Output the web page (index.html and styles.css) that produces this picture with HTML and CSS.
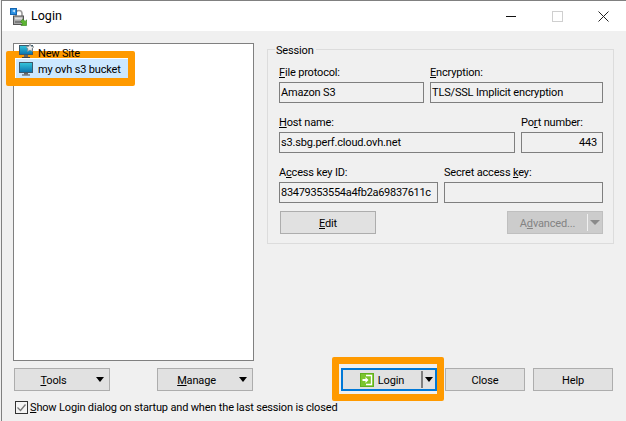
FILE: index.html
```html
<!DOCTYPE html>
<html lang="en">
<head>
<meta charset="utf-8">
<title>Login</title>
<link rel="stylesheet" href="styles.css">
</head>
<body>
<div class="window">
  <header class="titlebar">
    <svg class="app-icon" width="17" height="18" viewBox="0 0 17 18">
      <path d="M6 8V5.5a3 3 0 0 1 6 0V8" fill="none" stroke="#9a9a9a" stroke-width="1.6"/>
      <rect x="3.5" y="8" width="10" height="8.5" fill="#a8a8a8" stroke="#555"/>
      <rect x="5" y="9.5" width="7" height="2" fill="#dcdcdc"/>
      <rect x="5" y="13" width="7" height="2" fill="#7c7c7c"/>
      <rect x="0.5" y="0.5" width="6" height="6" fill="#2a8fe0" stroke="#1565b0"/>
      <path d="M2 3l3-1.5v3z" fill="#bfe3ff"/>
      <path d="M16.5 17.5h-5.5l1.7-1.7-2.2-2.2 2.4-2.4 2.2 2.2 1.7-1.7z" fill="#5cb531" stroke="#2f7d14" stroke-width=".6"/>
    </svg>
    <span class="title">Login</span>
    <div class="controls">
      <span class="control"><svg width="10" height="10" viewBox="0 0 10 10"><path d="M0 5.5h10" stroke="#111"/></svg></span>
      <span class="control"><svg width="11" height="11" viewBox="0 0 11 11"><rect x=".5" y=".5" width="10" height="10" fill="none" stroke="#cfcfcf"/></svg></span>
      <span class="control"><svg width="11" height="11" viewBox="0 0 11 11"><path d="M.5.5l10 10M10.5.5l-10 10" stroke="#222"/></svg></span>
    </div>
  </header>

  <div class="content">
    <div class="main">
      <div class="tree">
        <div class="tree-row new-site">
          <svg class="monitor" width="16" height="15" viewBox="0 0 16 15">
            <defs><linearGradient id="scr" x1="0" y1="0" x2="0" y2="1"><stop offset="0" stop-color="#35c6dc"/><stop offset="1" stop-color="#0a72ae"/></linearGradient></defs>
            <rect x=".5" y="1.5" width="13" height="9" fill="url(#scr)" stroke="#3c5a6c"/>
            <path d="M5 11h4v2H5z" fill="#666"/><path d="M3 13.5h8" stroke="#444"/>
            <path d="M11 0l1.3 2.4 2.7.4-2 1.9.5 2.7-2.5-1.3-2.5 1.3.5-2.7-2-1.9 2.7-.4z" fill="#eee" stroke="#888" stroke-width=".7"/>
          </svg>
          <span>New Site</span>
        </div>
        <div class="tree-row selected">
          <svg class="monitor" width="15" height="14" viewBox="0 0 15 14">
            <rect x=".5" y=".5" width="13" height="10" fill="url(#scr)" stroke="#3c5a6c"/>
            <path d="M5 11h4v1.5H5z" fill="#666"/><path d="M3 13h8" stroke="#444"/>
          </svg>
          <span>my ovh s3 bucket</span>
        </div>
      </div>

      <section class="session">
        <div class="legend">Session</div>
        <div class="field-row">
          <div class="col w145"><label class="lbl"><u>F</u>ile protocol:</label><div class="field">Amazon S3</div></div>
          <div class="col w173"><label class="lbl"><u>E</u>ncryption:</label><div class="field">TLS/SSL Implicit encryption</div></div>
        </div>
        <div class="field-row">
          <div class="col w236"><label class="lbl"><u>H</u>ost name:</label><div class="field">s3.sbg.perf.cloud.ovh.net</div></div>
          <div class="col w82"><label class="lbl">Po<u>r</u>t number:</label><div class="field right">443</div></div>
        </div>
        <div class="field-row">
          <div class="col w159"><label class="lbl">A<u>c</u>cess key ID:</label><div class="field key">83479353554a4fb2a69837611c</div></div>
          <div class="col w159"><label class="lbl">Secret access <u>k</u>ey:</label><div class="field"></div></div>
        </div>
        <div class="session-buttons">
          <div class="btn w96"><span class="btn-label"><u>E</u>dit</span></div>
          <div class="btn w96 disabled">
            <span class="btn-label">A<u>d</u>vanced...</span>
            <span class="sep"></span>
            <span class="arrow"></span>
          </div>
        </div>
      </section>
    </div>

    <div class="bottom">
      <div class="btn w96 menu"><span class="btn-label"><u>T</u>ools</span><span class="arrow"></span></div>
      <div class="btn w96 menu manage"><span class="btn-label"><u>M</u>anage</span><span class="arrow"></span></div>
      <div class="btn w96 login">
        <span class="btn-label with-icon">
          <svg width="14" height="14" viewBox="0 0 14 14">
            <rect width="14" height="14" fill="#62b01e"/>
            <rect x="1" y="1" width="12" height="12" fill="#7cc52e"/>
            <path d="M6 2.5h5.5v9H6" fill="none" stroke="#fff" stroke-width="1.3"/>
            <path d="M2.5 6h3V4l3 3-3 3V8h-3z" fill="#fff"/>
          </svg>
          <span>Login</span>
        </span>
        <span class="sep"></span>
        <span class="arrow"></span>
      </div>
      <div class="btn w80 close"><span class="btn-label">Close</span></div>
      <div class="btn w80 help"><span class="btn-label">Help</span></div>
    </div>

    <div class="check-row">
      <svg class="checkbox" width="13" height="13" viewBox="0 0 13 13">
        <rect x=".5" y=".5" width="12" height="12" fill="#f4f4f4" stroke="#333"/>
        <path d="M2.5 6.5l3 3 5-6" fill="none" stroke="#777" stroke-width="1.3"/>
      </svg>
      <span><u>S</u>how Login dialog on startup and when the last session is closed</span>
    </div>
  </div>

  <div class="mark mark-site"></div>
  <div class="mark mark-login"></div>
</div>
</body>
</html>
```

FILE: styles.css
```css
* { box-sizing: border-box; }
html, body { margin: 0; padding: 0; }
body {
  width: 626px;
  height: 421px;
  overflow: hidden;
  background: #f0f0f0;
  font-family: Roboto, "Noto Sans", sans-serif;
  font-size: 11px;
  letter-spacing: -0.17px;
  color: #000;
}
u { text-underline-offset: 1px; }

.window {
  position: relative;
  width: 625px;
  height: 421px;
  margin-left: 1px;
  border-left: 1px solid #808080;
  border-top: 1px solid #808080;
  background: #f0f0f0;
}

.titlebar {
  display: flex;
  align-items: center;
  height: 30px;
  background: #fff;
  padding-left: 8px;
}
.app-icon { margin-top: 1px; }
.title { margin: -1px 0 0 4px; font-size: 12.5px; letter-spacing: 0; }
.controls { display: flex; margin-left: auto; }
.control {
  display: flex;
  width: 46px;
  height: 30px;
  align-items: center;
  justify-content: center;
}

.content { padding: 12px 0 0 11px; }
.main { display: flex; align-items: flex-start; }

.tree {
  width: 241px;
  height: 318px;
  border: 1px solid #808080;
  background: #fff;
}
.tree-row { display: flex; align-items: center; white-space: nowrap; }
.new-site {
  position: relative;
  z-index: 2;
  height: 15px;
  padding-left: 5px;
}
.new-site span { margin-left: 3px; padding-top: 3px; }
.selected {
  width: 112px;
  height: 19px;
  margin-left: 2px;
  padding-left: 3px;
  background: #cce8ff;
}
.selected span { margin-left: 4px; padding-top: 2px; }

.session {
  width: 347px;
  height: 195px;
  margin: 6px 0 0 13px;
  padding: 0 9px 0 11px;
  border: 1px solid #dcdcdc;
}
.legend {
  width: fit-content;
  height: 14px;
  margin: -7px 0 7px -4px;
  padding: 1px 2px 0 1px;
  background: #f0f0f0;
  line-height: 14px;
}
.field-row { display: flex; gap: 6px; margin-bottom: 11px; }
.col { display: flex; flex-direction: column; }
.w145 { width: 145px; }
.w173 { width: 173px; }
.w236 { width: 236px; }
.w82 { width: 82px; }
.w159 { width: 159px; }
.lbl { display: block; height: 18px; line-height: 17px; white-space: nowrap; }
.field {
  height: 21px;
  padding: 0 1px;
  border: 1px solid #7f7f7f;
  line-height: 19px;
  white-space: nowrap;
  overflow: hidden;
}
.key { letter-spacing: -0.3px; }
.right { text-align: right; padding-right: 5px; }

.btn {
  display: flex;
  align-items: center;
  justify-content: center;
  height: 23px;
  border: 1px solid #adadad;
  background: #e1e1e1;
  white-space: nowrap;
}
.w96 { width: 96px; }
.w80 { width: 80px; }
.btn-label { flex: 1; padding-top: 1px; text-align: center; }
.with-icon { display: flex; align-items: center; justify-content: center; gap: 4px; padding-top: 0; }
.with-icon span { padding-top: 1px; }
.arrow {
  width: 0;
  height: 0;
  margin: 0 5px 0 4px;
  border-left: 4.5px solid transparent;
  border-right: 4.5px solid transparent;
  border-top: 5px solid #000;
}
.sep { width: 2px; height: 17px; background: #7f7f7f; }

.session-buttons {
  display: flex;
  justify-content: space-between;
  margin: -3px 1px 0 1px;
}
.disabled { background: #cccccc; border-color: #bfbfbf; color: #838383; }
.disabled .sep { width: 1px; background: #f0f0f0; }
.disabled .arrow { margin: 0 2px 0 2px; border-top-color: #8a8a8a; border-left-width: 5px; border-right-width: 5px; }

.bottom { display: flex; margin: 7px 0 0 1px; }
.manage { margin-left: 47px; }
.login {
  margin-left: 88px;
  border: 2px solid #0078d7;
}
.login .arrow { margin: 0 2px 0 2px; }
.close { margin-left: 8px; }
.help { margin-left: 8px; }

.check-row {
  display: flex;
  align-items: center;
  height: 13px;
  margin: 10px 0 0 2px;
  white-space: nowrap;
}
.checkbox { flex: none; margin-right: 2px; }

.mark {
  position: absolute;
  z-index: 1;
  border-style: solid;
  border-color: #ff9a00;
  border-radius: 2px;
  pointer-events: none;
}
.mark-site {
  left: 4px;
  top: 50px;
  width: 129px;
  height: 35px;
  border-width: 7px 7px 8px 9px;
}
.mark-login {
  left: 330px;
  top: 356px;
  width: 112px;
  height: 44px;
  border-width: 7px;
}
```
